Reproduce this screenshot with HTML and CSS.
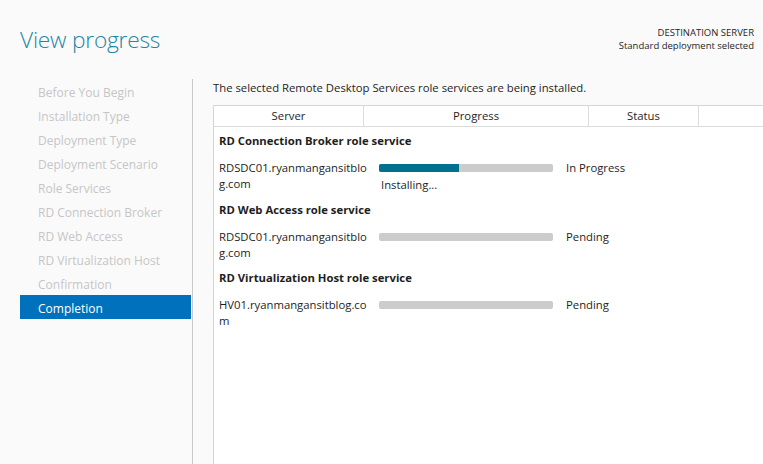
FILE: index.html
```html
<!DOCTYPE html>
<html>
<head>
<meta charset="utf-8">
<link rel="stylesheet" href="styles.css">
</head>
<body>
<div class="page">
  <header class="top">
    <h1 class="title">View progress</h1>
    <div class="dest">
      <div>DESTINATION SERVER</div>
      <div>Standard deployment selected</div>
    </div>
  </header>
  <div class="main">
    <nav class="nav">
      <div class="nav-item">Before You Begin</div>
      <div class="nav-item">Installation Type</div>
      <div class="nav-item">Deployment Type</div>
      <div class="nav-item">Deployment Scenario</div>
      <div class="nav-item">Role Services</div>
      <div class="nav-item">RD Connection Broker</div>
      <div class="nav-item">RD Web Access</div>
      <div class="nav-item">RD Virtualization Host</div>
      <div class="nav-item">Confirmation</div>
      <div class="nav-item active">Completion</div>
    </nav>
    <section class="content">
      <p class="intro">The selected Remote Desktop Services role services are being installed.</p>
      <div class="table">
        <div class="thead">
          <div class="th c1">Server</div>
          <div class="th c2">Progress</div>
          <div class="th c3">Status</div>
          <div class="th c4"></div>
        </div>
        <div class="tbody">
          <div class="group">
            <div class="group-title">RD Connection Broker role service</div>
            <div class="row">
              <div class="server">RDSDC01.ryanmangansitblo<br>g.com</div>
              <div class="prog">
                <div class="bar"><div class="fill" style="width:46%"></div></div>
                <div class="note">Installing...</div>
              </div>
              <div class="status">In Progress</div>
            </div>
          </div>
          <div class="group">
            <div class="group-title">RD Web Access role service</div>
            <div class="row">
              <div class="server">RDSDC01.ryanmangansitblo<br>g.com</div>
              <div class="prog">
                <div class="bar"></div>
              </div>
              <div class="status">Pending</div>
            </div>
          </div>
          <div class="group">
            <div class="group-title">RD Virtualization Host role service</div>
            <div class="row">
              <div class="server">HV01.ryanmangansitblog.co<br>m</div>
              <div class="prog">
                <div class="bar"></div>
              </div>
              <div class="status">Pending</div>
            </div>
          </div>
        </div>
      </div>
    </section>
  </div>
</div>
</body>
</html>
```
FILE: styles.css
```css
html, body {
  margin: 0;
  padding: 0;
  height: 100%;
}
body {
  background: #fafafa;
  font-family: "Open Sans", "Noto Sans", sans-serif;
  font-size: 11.3px;
  color: #1e1e1e;
  overflow: hidden;
}
.page {
  display: flex;
  flex-direction: column;
  height: 464px;
  width: 763px;
  overflow: hidden;
}
.top {
  display: flex;
  justify-content: space-between;
  align-items: flex-start;
  height: 79px;
  flex: none;
}
.title {
  margin: 24px 0 0 20px;
  font-size: 22.7px;
  font-weight: 300;
  line-height: 32px;
  color: #2484a5;
  letter-spacing: -0.2px;
}
.dest {
  margin: 26px 9px 0 0;
  text-align: right;
  font-size: 9.5px;
  line-height: 13px;
  color: #262626;
}
.main {
  display: flex;
  flex: 1;
  min-height: 0;
}
.nav {
  width: 172px;
  margin-left: 20px;
  border-right: 1px solid #c9c9c9;
  flex: none;
}
.nav-item {
  box-sizing: border-box;
  height: 24px;
  line-height: 21px;
  padding-top: 3px;
  padding-left: 18px;
  margin-right: 1px;
  color: #c6c6c6;
  font-size: 12px;
  white-space: nowrap;
}
.nav-item.active {
  background: #0071bc;
  color: #ffffff;
}
.content {
  flex: 1;
  margin-left: 20px;
  display: flex;
  flex-direction: column;
  min-width: 0;
}
.intro {
  margin: 0;
  height: 26px;
  line-height: 16px;
  box-sizing: border-box;
  padding-top: 1px;
  color: #1e1e1e;
}
.table {
  flex: 1;
  width: 600px;
  background: #ffffff;
  border: 1px solid #d5d5d5;
  border-bottom: none;
}
.thead {
  display: flex;
  height: 20px;
  border-bottom: 1px solid #dcdcdc;
}
.th {
  line-height: 20px;
  text-align: center;
  border-right: 1px solid #dcdcdc;
  box-sizing: border-box;
  color: #1e1e1e;
}
.c1 { width: 150px; }
.c2 { width: 225px; }
.c3 { width: 110px; }
.c4 { width: 115px; border-right: none; }
.tbody {
  padding: 6px 0 0 5px;
}
.group {
  margin-bottom: 9px;
}
.group-title {
  font-weight: 700;
  line-height: 16px;
  margin-bottom: 11px;
}
.row {
  display: grid;
  grid-template-columns: 160px 187px auto;
  line-height: 16px;
}
.prog {
  display: flex;
  flex-direction: column;
  align-items: flex-start;
}
.bar {
  width: 174px;
  height: 8px;
  margin-top: 4px;
  background: #cccccc;
  border-radius: 2px;
  overflow: hidden;
}
.fill {
  height: 100%;
  background: #00708f;
}
.note {
  margin-top: 5px;
  margin-left: 2px;
}
```
